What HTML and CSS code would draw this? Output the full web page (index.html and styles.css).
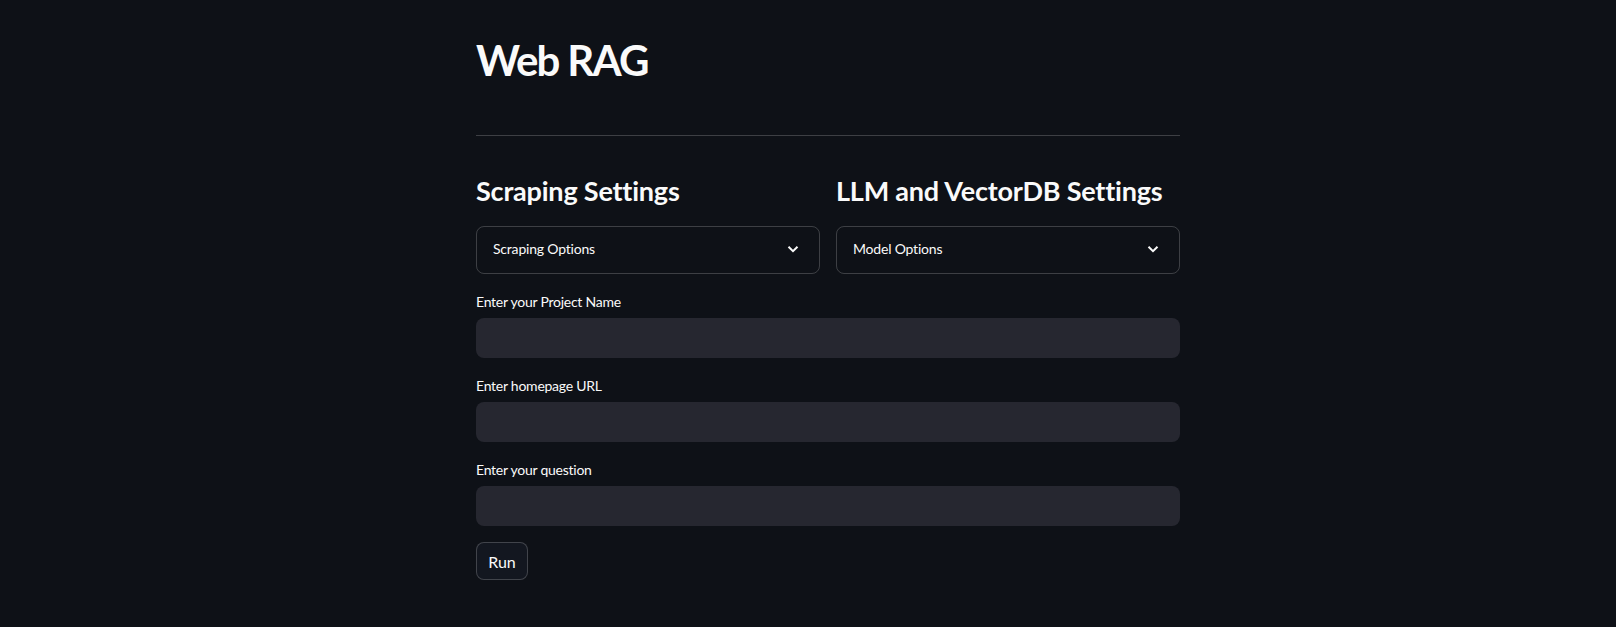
FILE: index.html
```html
<!DOCTYPE html>
<html lang="en">
<head>
<meta charset="utf-8">
<title>Web RAG</title>
<link rel="stylesheet" href="styles.css">
</head>
<body>
<main class="app">
  <div class="block">
    <h1 class="title">Web RAG</h1>
    <hr class="divider">
    <div class="columns">
      <section class="col">
        <h3 class="subhead">Scraping Settings</h3>
        <div class="expander">
          <span class="expander-label">Scraping Options</span>
          <svg class="chevron" width="12" height="8" viewBox="0 0 12 8"><path d="M1.5 1.8 L6 6.2 L10.5 1.8" fill="none" stroke="#fafafa" stroke-width="2"/></svg>
        </div>
      </section>
      <section class="col">
        <h3 class="subhead">LLM and VectorDB Settings</h3>
        <div class="expander">
          <span class="expander-label">Model Options</span>
          <svg class="chevron" width="12" height="8" viewBox="0 0 12 8"><path d="M1.5 1.8 L6 6.2 L10.5 1.8" fill="none" stroke="#fafafa" stroke-width="2"/></svg>
        </div>
      </section>
    </div>
    <div class="field">
      <label class="field-label">Enter your Project Name</label>
      <div class="input"></div>
    </div>
    <div class="field">
      <label class="field-label">Enter homepage URL</label>
      <div class="input"></div>
    </div>
    <div class="field">
      <label class="field-label">Enter your question</label>
      <div class="input"></div>
    </div>
    <button class="run-btn">Run</button>
  </div>
</main>
</body>
</html>
```
FILE: styles.css
```css
html, body {
  margin: 0;
  padding: 0;
  background: #0e1117;
  color: #fafafa;
  font-family: "Lato", "Open Sans", sans-serif;
}
.app {
  width: 744px;
  margin: 0 auto;
  padding: 35px 0 40px 40px;
  box-sizing: border-box;
}
.block {
  width: 704px;
  display: flex;
  flex-direction: column;
}
.title {
  margin: 0;
  font-size: 42px;
  line-height: 1.2;
  font-weight: 700;
  letter-spacing: -1.7px;
}
.divider {
  margin: 49.6px 0 0 0;
  border: none;
  height: 1px;
  background: rgba(250, 250, 250, 0.2);
}
.columns {
  display: grid;
  grid-template-columns: 1fr 1fr;
  gap: 16px;
  margin-top: 39.4px;
}
.subhead {
  margin: 0;
  font-size: 27px;
  line-height: 1.2;
  font-weight: 700;
  letter-spacing: -0.2px;
}
.expander {
  margin-top: 18px;
  height: 48px;
  box-sizing: border-box;
  border: 1px solid rgba(250, 250, 250, 0.2);
  border-radius: 8px;
  display: flex;
  align-items: center;
  justify-content: space-between;
  padding: 0 20px 2px 16px;
}
.expander-label {
  font-size: 14px;
  line-height: 20px;
  letter-spacing: -0.2px;
}
.chevron {
  display: block;
}
.field {
  display: flex;
  flex-direction: column;
  margin-top: 16px;
}
.field-label {
  font-size: 14px;
  line-height: 24px;
  height: 24px;
  margin-bottom: 4px;
  letter-spacing: -0.25px;
}
.input {
  height: 40px;
  background: #262730;
  border-radius: 8px;
}
.run-btn {
  align-self: flex-start;
  margin-top: 16.5px;
  height: 38px;
  width: 52px;
  padding: 0;
  box-sizing: border-box;
  background: #131720;
  color: #fafafa;
  border: 1px solid rgba(250, 250, 250, 0.2);
  border-radius: 8px;
  font-family: "Lato", "Open Sans", sans-serif;
  font-size: 16px;
}
```
